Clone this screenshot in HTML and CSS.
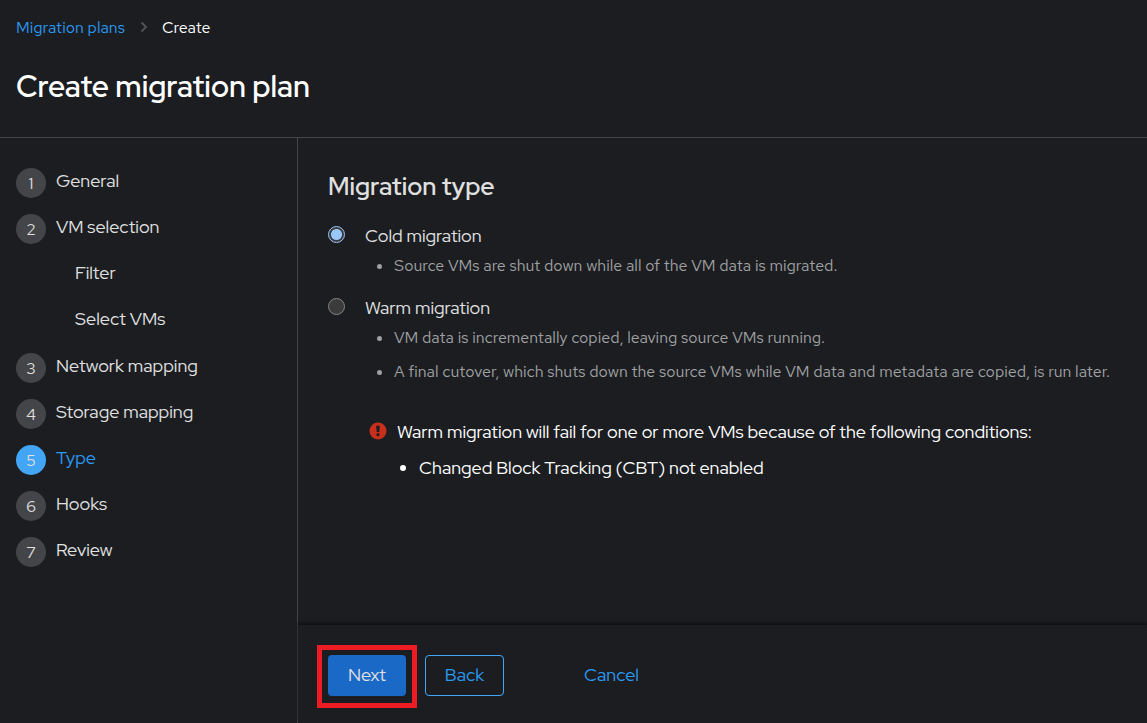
FILE: index.html
```html
<!DOCTYPE html>
<html lang="en">
<head>
<meta charset="utf-8">
<meta name="viewport" content="width=device-width, initial-scale=1">
<title>Create migration plan</title>
<link rel="stylesheet" href="styles.css">
</head>
<body>
<header class="page-header">
  <nav class="breadcrumb" aria-label="Breadcrumb">
    <a class="breadcrumb-link" href="#plans">Migration plans</a>
    <svg class="breadcrumb-arrow" viewBox="0 0 8 12" aria-hidden="true"><path d="M1.500 1.500 6 6 1.500 10.500"/></svg>
    <span class="breadcrumb-current" aria-current="page">Create</span>
  </nav>
  <h1 class="page-title">Create migration plan</h1>
</header>
<div class="wizard">
  <nav class="steps" aria-label="Wizard steps">
    <ol class="step-list">
      <li><a class="step" href="#general"><span class="step-number">1</span><span class="step-label">General</span></a></li>
      <li><a class="step" href="#vms"><span class="step-number">2</span><span class="step-label">VM selection</span></a>
        <ol class="step-list substeps">
          <li><a class="step" href="#filter"><span class="step-label">Filter</span></a></li>
          <li><a class="step" href="#select"><span class="step-label">Select VMs</span></a></li>
        </ol>
      </li>
      <li><a class="step" href="#network"><span class="step-number">3</span><span class="step-label">Network mapping</span></a></li>
      <li><a class="step" href="#storage"><span class="step-number">4</span><span class="step-label">Storage mapping</span></a></li>
      <li><a class="step current" href="#type" aria-current="step"><span class="step-number">5</span><span class="step-label">Type</span></a></li>
      <li><a class="step" href="#hooks"><span class="step-number">6</span><span class="step-label">Hooks</span></a></li>
      <li><a class="step" href="#review"><span class="step-number">7</span><span class="step-label">Review</span></a></li>
    </ol>
  </nav>
  <form class="panel">
    <main class="panel-body">
      <h2 class="section-title">Migration type</h2>
      <div class="option">
        <input class="radio" type="radio" name="type" id="cold" checked>
        <label class="option-label" for="cold">Cold migration</label>
        <ul class="notes">
          <li>Source VMs are shut down while all of the VM data is migrated.</li>
        </ul>
      </div>
      <div class="option">
        <input class="radio" type="radio" name="type" id="warm">
        <label class="option-label" for="warm">Warm migration</label>
        <ul class="notes">
          <li>VM data is incrementally copied, leaving source VMs running.</li>
          <li>A final cutover, which shuts down the source VMs while VM data and metadata are copied, is run later.</li>
        </ul>
      </div>
      <div class="alert">
        <svg class="alert-icon" viewBox="0 0 18 18" aria-hidden="true"><circle cx="9" cy="9" r="8.500"/><path d="M7.200 3.700h3.600l-.5 6.300H7.700z"/><circle class="alert-dot" cx="9" cy="12.700" r="1.600"/></svg>
        <div>
          <p class="alert-text">Warm migration will fail for one or more VMs because of the following conditions:</p>
          <ul class="conditions">
            <li>Changed Block Tracking (CBT) not enabled</li>
          </ul>
        </div>
      </div>
    </main>
    <footer class="actions">
      <span class="highlight"><button class="button primary" type="button">Next</button></span>
      <button class="button secondary" type="button">Back</button>
      <button class="button link" type="button">Cancel</button>
    </footer>
  </form>
</div>
</body>
</html>
```
FILE: styles.css
```css
* { box-sizing: border-box; }
body {
  margin: 0;
  min-height: 100vh;
  display: flex;
  flex-direction: column;
  background: #1b1d21;
  color: #e0e0e0;
  font-family: "Red Hat Display", "Red Hat Text", Inter, sans-serif;
  font-size: 18px;
  line-height: 26px;
}
h1, h2, p, ul, ol { margin: 0; padding: 0; }
h1, h2 { font-weight: 600; }
a { text-decoration: none; }

.page-header {
  padding: 16px 16px 28px;
  border-bottom: 1px solid #444548;
  color: #fff;
}
.breadcrumb {
  display: flex;
  align-items: center;
  font-family: "Red Hat Text", Inter, sans-serif;
  font-size: 16px;
  line-height: 24px;
}
.breadcrumb-link { color: #2b9af3; }
.breadcrumb-arrow {
  width: 8px;
  height: 12px;
  margin: 0 14px 2px 15px;
  fill: none;
  stroke: #4f5255;
  stroke-width: 2;
}
.page-title {
  margin-top: 24px;
  font-size: 30px;
  line-height: 45px;
}

.wizard { flex: 1; display: flex; }
.steps {
  flex: 0 0 298px;
  padding: 30px 16px;
  border-right: 1px solid #444548;
}
.step-list {
  display: flex;
  flex-direction: column;
  gap: 16px;
  list-style: none;
}
.substeps { margin-top: 16px; padding: 0 0 1px 59px; }
.step {
  display: flex;
  gap: 10px;
  height: 30px;
  color: #e0e0e0;
}
.step-number {
  width: 30px;
  height: 30px;
  border-radius: 50%;
  background: #444548;
  font-family: "Red Hat Text", Inter, sans-serif;
  font-size: 16px;
  line-height: 32px;
  text-align: center;
}
.current { color: #2b9af3; }
.current .step-number { background: #42a5f5; color: #e0e0e0; }

.panel { flex: 1; min-width: 0; display: flex; flex-direction: column; }
.panel-body { flex: 1; padding: 31px 24px 30px 30px; }
.section-title {
  margin-bottom: 18px;
  font-size: 25px;
  line-height: 36px;
}
.option {
  display: grid;
  grid-template-columns: 17px 1fr;
  column-gap: 20px;
  margin-bottom: 12px;
}
.radio {
  appearance: none;
  width: 17px;
  height: 17px;
  margin: 3px 0 0;
  border: 1px solid #858585;
  border-radius: 50%;
  background: #3b3b3b;
}
.radio:checked {
  border-color: #99c8ff;
  background: radial-gradient(circle, #99c8ff 5px, #3b3b3b 6px);
}
.notes {
  grid-column: 2;
  display: flex;
  flex-direction: column;
  gap: 10px;
  padding: 5px 0 5px 29px;
  color: #a0a1a3;
  font-family: "Red Hat Text", Inter, sans-serif;
  font-size: 16px;
  line-height: 24px;
}
.alert {
  display: flex;
  gap: 10px;
  margin: 30px 0 0 41px;
  color: #fff;
}
.alert-icon { flex: none; width: 18px; height: 18px; margin-top: 3px; fill: #c9301c; }
.alert-icon path, .alert-dot { fill: #1b1d21; }
.conditions { margin-top: 10px; padding-left: 22px; }

.actions {
  display: flex;
  align-items: center;
  padding: 30px 30px 27px;
  box-shadow: 0 -2px 2px #101114;
}
.button {
  height: 41px;
  padding: 0 19px 1px;
  border: 1px solid transparent;
  border-radius: 4px;
  background: none;
  color: #2b9af3;
  font: inherit;
}
.highlight { position: relative; margin-right: 19px; }
.highlight::after {
  content: "";
  position: absolute;
  inset: -10px -11px -12px;
  border: 5px solid #ed1c24;
  pointer-events: none;
}
.primary { background: #1b69c7; color: #e0e0e0; }
.secondary { border-color: #42a5f5; }
.link { margin-left: 60px; }
```
